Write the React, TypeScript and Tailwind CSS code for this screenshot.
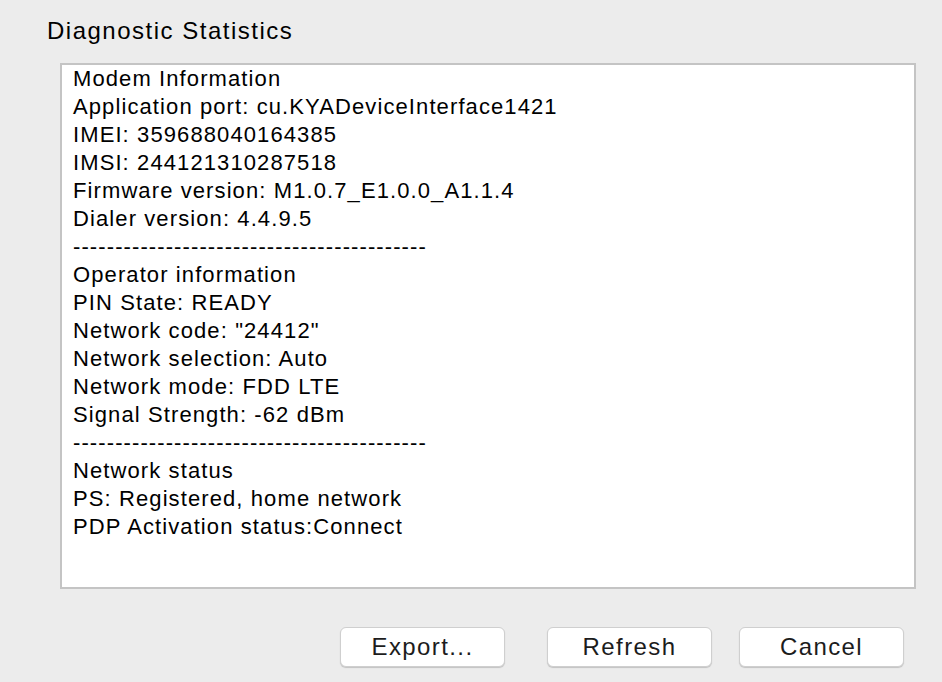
const DASHES = "------------------------------------------";

const LINES = [
  "Modem Information",
  "Application port: cu.KYADeviceInterface1421",
  "IMEI: 359688040164385",
  "IMSI: 244121310287518",
  "Firmware version: M1.0.7_E1.0.0_A1.1.4",
  "Dialer version: 4.4.9.5",
  DASHES,
  "Operator information",
  "PIN State: READY",
  'Network code: "24412"',
  "Network selection: Auto",
  "Network mode: FDD LTE",
  "Signal Strength: -62 dBm",
  DASHES,
  "Network status",
  "PS: Registered, home network",
  "PDP Activation status:Connect",
];

function DialogButton({ label }: { label: string }) {
  return (
    <button className="w-[165px] h-[40px] rounded-[6px] bg-white border border-[#cfcfcf] shadow-[0_1px_1px_rgba(0,0,0,0.18)] text-[24px] tracking-[1.4px] text-[#1c1c1c] leading-none">
      {label}
    </button>
  );
}

export default function App() {
  return (
    <div
      className="w-[942px] h-[682px] bg-[#ececec] overflow-hidden text-black"
      style={{ fontFamily: '"Liberation Sans", Arial, sans-serif' }}
    >
      <div className="pl-[47px] pt-[16px] text-[24px] tracking-[1.5px] leading-[30px]">
        Diagnostic Statistics
      </div>
      <div className="ml-[60px] mt-[17px] w-[856px] h-[526px] bg-white border-2 border-[#c4c4c4] pl-[11px] pt-[0px]">
        {LINES.map((line, i) => (
          <div key={i} className="text-[22px] tracking-[1.1px] leading-[28px] whitespace-pre">
            {line}
          </div>
        ))}
      </div>
      <div className="flex justify-end gap-[27px] mt-[38px] pr-[38px]">
        <div className="flex gap-[42px]">
          <DialogButton label="Export..." />
          <DialogButton label="Refresh" />
        </div>
        <DialogButton label="Cancel" />
      </div>
    </div>
  );
}
